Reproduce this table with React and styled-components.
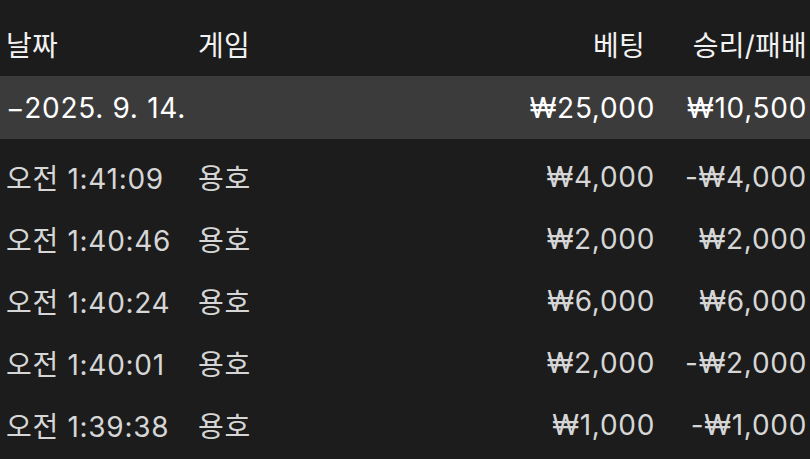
import React from 'react';
import styled, { createGlobalStyle } from 'styled-components';

const rows = [
  { time: '오전 1:41:09', game: '용호', bet: '₩4,000', result: '-₩4,000' },
  { time: '오전 1:40:46', game: '용호', bet: '₩2,000', result: '₩2,000' },
  { time: '오전 1:40:24', game: '용호', bet: '₩6,000', result: '₩6,000' },
  { time: '오전 1:40:01', game: '용호', bet: '₩2,000', result: '-₩2,000' },
  { time: '오전 1:39:38', game: '용호', bet: '₩1,000', result: '-₩1,000' },
];

const App = () => {
  return (
    <>
      <GlobalStyle />
      <Table>
        <HeaderRow>
          <Cell>날짜</Cell>
          <Cell>게임</Cell>
          <Cell $right $inset={10}>베팅</Cell>
          <Cell $right>승리/패배</Cell>
        </HeaderRow>

        {/* Day group */}
        <GroupRow>
          <Cell>−2025. 9. 14.</Cell>
          <Cell />
          <Cell $right>₩25,000</Cell>
          <Cell $right>₩10,500</Cell>
        </GroupRow>

        <Body>
          {rows.map((r) => (
            <DataRow key={r.time}>
              <Cell>{r.time}</Cell>
              <Cell>{r.game}</Cell>
              <Cell $right>{r.bet}</Cell>
              <Cell $right>{r.result}</Cell>
            </DataRow>
          ))}
        </Body>
      </Table>
    </>
  );
};

const GlobalStyle = createGlobalStyle`
  html, body {
    margin: 0;
    padding: 0;
    background: #1c1c1c;
    overflow: hidden;
  }
  body {
    font-family: "Inter", "Noto Sans CJK KR", sans-serif;
  }
`;

const Table = styled.div`
  width: 810px;
  height: 459px;
  background: #1c1c1c;
  overflow: hidden;
`;

const RowBase = styled.div`
  display: grid;
  grid-template-columns: 192px 1fr 200px 152px;
  align-items: center;
  padding: 0 3px 0 6px;
  box-sizing: border-box;
  font-size: 28px;
  letter-spacing: 0.7px;
`;

const HeaderRow = styled(RowBase)`
  height: 76px;
  padding-top: 12px;
  color: #f2f2f2;
  letter-spacing: 0.2px;
`;

const GroupRow = styled(RowBase)`
  height: 63px;
  background: #3b3b3b;
  color: #ffffff;
`;

const Body = styled.div`
  margin-top: 7px;
`;

const DataRow = styled(RowBase)`
  height: 62px;
  color: #d6d6d6;
`;

const Cell = styled.div`
  white-space: nowrap;
  text-align: ${(p) => (p.$right ? 'right' : 'left')};
  padding-right: ${(p) => p.$inset || 0}px;
`;

export default App;
